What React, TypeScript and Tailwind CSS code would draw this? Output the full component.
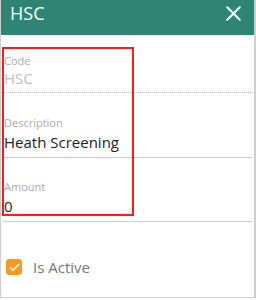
import { X, Check } from "lucide-react";

export default function App() {
  return (
    <div
      className="relative w-[256px] h-[298px] bg-white border-l border-r-2 border-b border-[#cfcfcf]"
      style={{ fontFamily: '"Open Sans", "Liberation Sans", sans-serif' }}
    >
      {/* Header */}
      <div className="h-[35px] bg-[#2e8574] flex items-center justify-between pl-[9px] pr-[8px] pb-[9px]">
        <h1 className="text-[18px] leading-[24px] text-white">HSC</h1>
        <X size={25} strokeWidth={2} className="text-white" />
      </div>

      {/* Form */}
      <div className="pl-[2px] pr-[1px]">
        <Field label="Code" value="HSC" disabled top="pt-[18px] pb-[3px]" valueGap="-mt-px" />
        <Field label="Description" value="Heath Screening" top="pt-[22px] pb-[4px]" valueGap="mt-px" />
        <Field label="Amount" value="0" top="pt-[21px] pb-[4px]" valueGap="mt-px" />

        <div className="flex items-center gap-[11px] pl-[3px] mt-[35px]">
          <span className="w-[16px] h-[16px] rounded-[3px] bg-[#f99a1e] flex items-center justify-center">
            <Check size={13} strokeWidth={2.5} className="text-white" />
          </span>
          <span className="text-[15px] leading-[20px] text-[#777]">Is Active</span>
        </div>
      </div>

      {/* annotation box */}
      <div className="absolute left-[1px] top-[47px] w-[132px] h-[169px] border-2 border-[#ff1a1a] pointer-events-none" />
    </div>
  );
}

function Field({
  label,
  value,
  disabled,
  top,
  valueGap,
}: {
  label: string;
  value: string;
  disabled?: boolean;
  top: string;
  valueGap: string;
}) {
  return (
    <div
      className={`${top} border-b ${
        disabled ? "border-dotted border-[#bdbdbd]" : "border-solid border-[#cccccc]"
      }`}
    >
      <div className="text-[11px] leading-[15px] text-[#acacac] pl-px">{label}</div>
      <div
        className={`${valueGap} text-[15px] leading-[22px] pl-px ${
          disabled ? "text-[#bdbdbd]" : "text-[#222]"
        }`}
      >
        {value}
      </div>
    </div>
  );
}
